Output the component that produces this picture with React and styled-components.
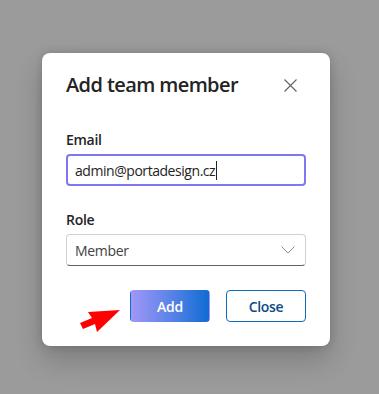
import React from "react";
import styled, { createGlobalStyle } from "styled-components";

const GlobalStyle = createGlobalStyle`
  html, body {
    margin: 0;
    padding: 0;
    background: #9b9b9b;
    font-family: "Open Sans", "Noto Sans", sans-serif;
  }
  * { box-sizing: border-box; }
`;

const Backdrop = styled.div`
  width: 379px;
  height: 394px;
  padding: 53px 0 0 42px;
  position: relative;
`;

const Dialog = styled.div`
  width: 288px;
  background: #ffffff;
  border-radius: 8px;
  padding: 18px 24px 24px;
  box-shadow: 0 0 8px rgba(0, 0, 0, 0.16), 0 14px 28px rgba(0, 0, 0, 0.2);
  display: flex;
  flex-direction: column;
`;

const Header = styled.div`
  display: flex;
  align-items: center;
  justify-content: space-between;
  height: 28px;
  margin-bottom: 31px;
`;

const Title = styled.h2`
  margin: 0;
  font-size: 20px;
  line-height: 28px;
  font-weight: 600;
  letter-spacing: -0.6px;
  color: #242424;
`;

const IconButton = styled.button`
  border: 0;
  background: none;
  padding: 0;
  width: 20px;
  height: 20px;
  margin-right: 6px;
  display: flex;
  align-items: center;
  justify-content: center;
  color: #616161;
`;

const Field = styled.div`
  display: flex;
  flex-direction: column;
  gap: 4px;
  margin-bottom: 24px;
`;

const Label = styled.label`
  font-size: 14px;
  line-height: 20px;
  font-weight: 600;
  letter-spacing: -0.3px;
  color: #242424;
`;

const Input = styled.div`
  height: 32px;
  border: 2px solid #7d78f0;
  border-radius: 4px;
  padding: 0 7px;
  display: flex;
  align-items: center;
  font-size: 14px;
  letter-spacing: -0.45px;
  color: #242424;
`;

const Caret = styled.span`
  display: inline-block;
  width: 1px;
  height: 19px;
  background: #242424;
  margin-left: 1px;
`;

const Select = styled.div`
  height: 32px;
  border: 1px solid #d1d1d1;
  border-bottom-color: #616161;
  border-radius: 4px;
  padding: 0 10px 0 8px;
  display: flex;
  align-items: center;
  justify-content: space-between;
  font-size: 14px;
  letter-spacing: -0.3px;
  color: #424242;
`;

const Actions = styled.div`
  display: flex;
  justify-content: flex-end;
  gap: 16px;
`;

const Button = styled.button`
  width: 80px;
  height: 32px;
  border-radius: 4px;
  font-family: inherit;
  font-size: 14px;
  font-weight: 600;
  letter-spacing: -0.3px;
  border: 1px solid ${({ $primary }) => ($primary ? "transparent" : "#0f6cbd")};
  background: ${({ $primary }) =>
    $primary ? "linear-gradient(90deg, #a197f7 0%, #5b83e8 50%, #0f6cd3 100%)" : "#ffffff"};
  color: ${({ $primary }) => ($primary ? "#ffffff" : "#0f4a84")};
`;

const Pointer = styled.svg`
  position: absolute;
  left: 78px;
  top: 308px;
`;

export default function App() {
  return (
    <>
      <GlobalStyle />
      <Backdrop>
        <Dialog>
          <Header>
            <Title>Add team member</Title>
            <IconButton aria-label="Close">
              <svg width="13" height="13" viewBox="0 0 13 13">
                <path d="M0.5 0.5 L12.5 12.5 M12.5 0.5 L0.5 12.5" stroke="currentColor" strokeWidth="1.1" fill="none" />
              </svg>
            </IconButton>
          </Header>
          <Field>
            <Label>Email</Label>
            <Input>
              admin@portadesign.cz
              <Caret />
            </Input>
          </Field>
          <Field>
            <Label>Role</Label>
            <Select>
              Member
              <svg width="14" height="8" viewBox="0 0 14 8">
                <path d="M0.5 0.5 L7 7 L13.5 0.5" stroke="#8a8a8a" strokeWidth="1" fill="none" />
              </svg>
            </Select>
          </Field>
          <Actions>
            <Button $primary>Add</Button>
            <Button>Close</Button>
          </Actions>
        </Dialog>
        <Pointer width="46" height="26" viewBox="0 0 46 26">
          <polygon points="42,2 10,4 14,10 2,15 5,21 17,16 19,24" fill="#ff0000" />
        </Pointer>
      </Backdrop>
    </>
  );
}
